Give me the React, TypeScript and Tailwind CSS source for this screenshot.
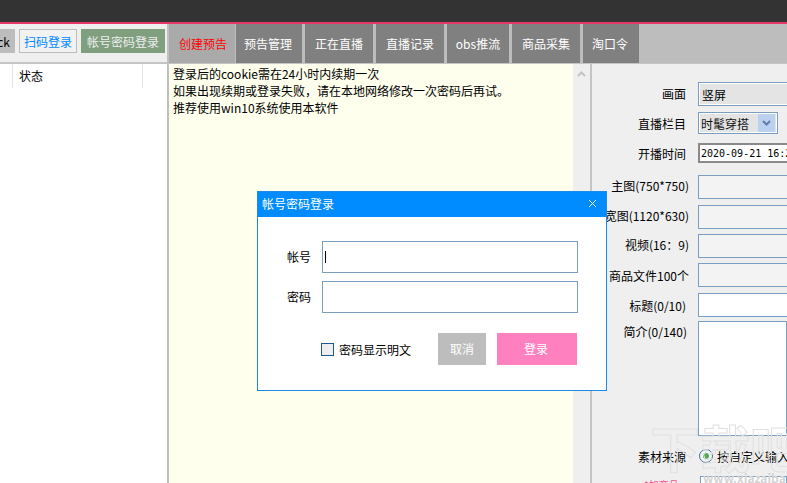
import React from "react";

const tabs: [string, string, string][] = [
  ["创建预告", "w-[66px] pl-[2px]", "bg-[#aaaaaa] text-[#ff0000]"],
  ["预告管理", "w-[66px] ml-px pr-[2px]", "bg-[#808080] text-white"],
  ["正在直播", "w-[68px] ml-[3px]", "bg-[#808080] text-white"],
  ["直播记录", "w-[68px] ml-[3px]", "bg-[#808080] text-white"],
  ["obs推流", "w-[62px] ml-[3px]", "bg-[#808080] text-white"],
  ["商品采集", "w-[68px] ml-[3px]", "bg-[#808080] text-white"],
  ["淘口令", "w-[56px] ml-[3px] pr-[2px]", "bg-[#808080] text-white"],
];

function Row({ label, className, labelClass, field }: { label: string; className: string; labelClass?: string; field: React.ReactNode }) {
  return (
    <div className={`flex items-center ${className}`}>
      <div className={`w-[97px] shrink-0 whitespace-nowrap text-right text-black ${labelClass ?? ""}`}>{label}</div>
      <div className="ml-[9px] h-full flex-1">{field}</div>
    </div>
  );
}

const box = "h-full w-[110px] border border-[#7a9ebf] bg-[#f3f3f3]";

export default function App() {
  return (
    <div className="relative flex h-[483px] w-[787px] flex-col overflow-hidden bg-[#efefef] font-['Noto_Sans_CJK_SC','Liberation_Sans',sans-serif] text-[12px] leading-[17px] text-black">
      <div className="h-[22px] shrink-0 bg-[#333333]" />
      <div className="h-[2px] shrink-0 bg-[#e8386a]" />
      <div className="flex min-h-0 flex-1">
        {/* left column */}
        <div className="flex w-[169px] shrink-0 flex-col border-r-2 border-[#c0c0c0] bg-white">
          <div className="flex h-[40px] shrink-0 items-start overflow-hidden border-b-2 border-[#c4c4c4] bg-[#efefef] pt-[5px]">
            <div className="flex h-[24px] w-[15px] shrink-0 items-center justify-end overflow-hidden bg-[#bdbdbd] pr-[5px]">ck</div>
            <div className="ml-[4px] flex h-[24px] w-[58px] shrink-0 items-center justify-center whitespace-nowrap border border-[#bdbdbd] bg-[#f2f2f2] text-[#0088ff]">扫码登录</div>
            <div className="ml-[4px] flex h-[24px] w-[84px] shrink-0 items-center justify-center whitespace-nowrap bg-[#7f9f7f] text-[#eeeeee]">帐号密码登录</div>
          </div>
          <div className="flex h-[24px] shrink-0 items-center">
            <div className="h-full w-[13px] border-r border-[#e4e4e4]" />
            <div className="h-full w-[130px] border-r border-[#e4e4e4] pl-[6px] leading-[24px]">状态</div>
          </div>
        </div>
        {/* main column */}
        <div className="flex min-w-0 flex-1 flex-col">
          <div className="flex h-[39px] shrink-0 bg-[#bdbdbd]">
            {tabs.map(([t, w, c]) => (
              <div key={t} className={`flex shrink-0 items-center justify-center whitespace-nowrap ${w} ${c}`}>{t}</div>
            ))}
          </div>
          <div className="flex min-h-0 flex-1 border-t border-[#c4c4c4]">
            <div className="w-[404px] shrink-0 bg-[#ffffee] pl-[4px] pt-[1px]">
              <p>登录后的cookie需在24小时内续期一次</p>
              <p>如果出现续期或登录失败，请在本地网络修改一次密码后再试。</p>
              <p>推荐使用win10系统使用本软件</p>
            </div>
            <div className="flex w-[17px] shrink-0 justify-center bg-[#efefef] pt-[7px]">
              <svg width="9" height="6" viewBox="0 0 9 6" fill="none" stroke="#c4c4c4" strokeWidth="2"><path d="M1 5l3.5-3.5L8 5" /></svg>
            </div>
            <div className="w-[2px] shrink-0 bg-[#c4c4c4]" />
            <div className="min-w-0 flex-1 pt-[18px]">
              <Row label="画面" className="h-[24px]" labelClass="pr-[3px] pb-[2px]" field={
                <div className="flex h-full w-[110px] items-center border border-[#7a9ebf] bg-[#e4e4e4] pl-[3px] shadow-[inset_0_0_0_1px_#ffffff]">竖屏</div>
              } />
              <Row label="直播栏目" className="mt-[6px] h-[22px]" labelClass="pr-[3px]" field={
                <div className="flex h-full w-[80px] items-center justify-between border border-[#7a9ebf] bg-[#e4e4e4] pl-[2px] pr-[2px] shadow-[inset_0_0_0_1px_#ffffff]">
                  <span className="whitespace-nowrap text-[#111111]">时髦穿搭</span>
                  <span className="flex h-[18px] w-[17px] items-center justify-center bg-[#bcd0f0]">
                    <svg width="9" height="6" viewBox="0 0 9 6" fill="none" stroke="#5f7fa8" strokeWidth="2"><path d="M1 1l3.5 3.5L8 1" /></svg>
                  </span>
                </div>
              } />
              <Row label="开播时间" className="mt-[9px] h-[20px]" labelClass="pr-[3px]" field={
                <div className="flex h-full w-[110px] items-center overflow-hidden whitespace-nowrap border-2 border-[#8a8a8a] bg-white pl-[1px] font-['DejaVu_Sans_Mono',monospace] text-[10px]">2020-09-21 16:27:00</div>
              } />
              <Row label="主图(750*750)" className="mt-[12px] h-[24px]" labelClass="pb-[4px]" field={<div className={box} />} />
              <Row label="宽图(1120*630)" className="mt-[6px] h-[24px]" labelClass="pb-[4px]" field={<div className={box} />} />
              <Row label="视频(16：9)" className="mt-[5px] h-[24px]" labelClass="pb-[4px]" field={<div className={box} />} />
              <Row label="商品文件100个" className="mt-[5px] h-[24px]" field={<div className={box} />} />
              <Row label="标题(0/10)" className="mt-[6px] h-[24px]" labelClass="pr-[3px]" field={<div className="h-full w-[110px] border border-[#7a9ebf] bg-white" />} />
              <div className="mt-[4px] flex h-[115px] items-start">
                <div className="w-[97px] shrink-0 whitespace-nowrap pr-[2px] pt-[2px] text-right">简介(0/140)</div>
                <div className="ml-[9px] h-full w-[110px] border border-[#7a9ebf] bg-white" />
              </div>
              <div className="mt-[11px] flex h-[18px] items-center">
                <div className="w-[97px] shrink-0 pr-[3px] text-right">素材来源</div>
                <span className="ml-[10px] flex h-[14px] w-[14px] shrink-0 items-center justify-center rounded-full border border-[#3f6f9f] bg-[#f4f4f4]">
                  <span className="h-[6px] w-[6px] rounded-full bg-[#55aa55]" />
                </span>
                <span className="ml-[4px] whitespace-nowrap">按自定义输入</span>
              </div>
              <div className="mt-[11px] flex h-[20px]">
                <div className="ml-[52px] w-[42px] whitespace-nowrap text-[10px] text-[#ff4d88]">*加商品</div>
                <div className="ml-[16px] h-full w-[90px] border border-[#7a9ebf] bg-white" />
              </div>
            </div>
          </div>
        </div>
      </div>

      {/* watermark */}
      <div className="pointer-events-none absolute left-[650px] top-[416px] whitespace-nowrap text-[50px] font-bold leading-[60px] text-transparent [-webkit-text-stroke:1px_#e0e0e0]">下载吧</div>
      <div className="pointer-events-none absolute left-[703px] top-[470px] whitespace-nowrap text-[12px] font-bold leading-[16px] text-[#d4d4d4]">www.xiazaiba.com</div>

      {/* dialog */}
      <div className="absolute left-[257px] top-[191px] flex h-[200px] w-[350px] flex-col border border-[#1a8be8] bg-white">
        <div className="flex h-[25px] shrink-0 items-center justify-between bg-[#008cff] pb-[2px] pl-[4px] pr-[9px] text-white">
          <span>帐号密码登录</span>
          <svg width="9" height="9" viewBox="0 0 9 9" stroke="#ffffff" strokeWidth="1" fill="none"><path d="M1 1l7 7M8 1l-7 7" /></svg>
        </div>
        <div className="flex flex-1 flex-col pl-[29px] pt-[24px]">
          <div className="flex h-[32px] items-center">
            <span className="mb-[2px] w-[24px] shrink-0">帐号</span>
            <div className="ml-[11px] flex h-full w-[256px] items-center border border-[#7a9ebf] pl-[2px]">
              <span className="h-[12px] w-px bg-black" />
            </div>
          </div>
          <div className="mt-[8px] flex h-[32px] items-center">
            <span className="mb-[2px] w-[24px] shrink-0">密码</span>
            <div className="ml-[11px] h-full w-[256px] border border-[#7a9ebf]" />
          </div>
          <div className="mt-[20px] flex h-[32px] items-center pl-[34px]">
            <span className="h-[13px] w-[13px] shrink-0 border border-[#1b5a8f] bg-[#eeeeee]" />
            <span className="ml-[5px] whitespace-nowrap">密码显示明文</span>
            <div className="ml-[27px] flex h-full w-[48px] items-center justify-center bg-[#bdbdbd] pb-[2px] text-white">取消</div>
            <div className="ml-[11px] flex h-full w-[80px] items-center justify-center bg-[#ff80bf] pb-[2px] pr-[2px] text-white">登录</div>
          </div>
        </div>
      </div>
    </div>
  );
}
